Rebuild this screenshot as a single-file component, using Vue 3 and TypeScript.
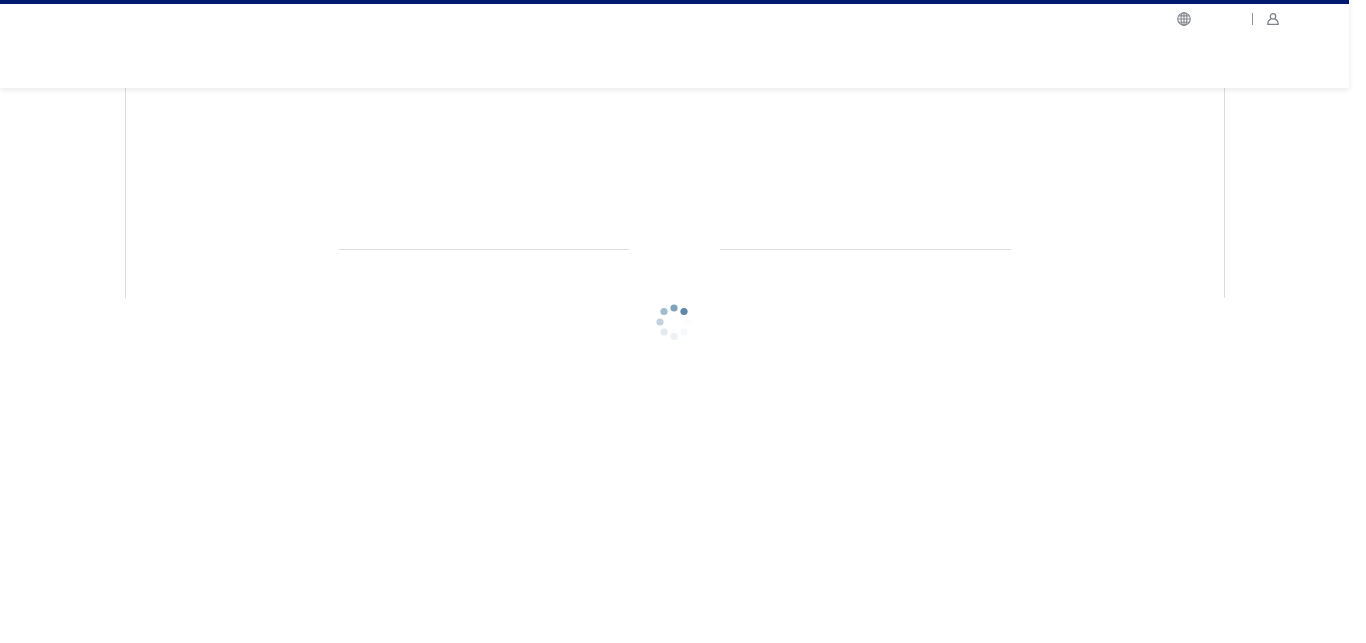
<script setup lang="ts">
// loader dots, clockwise from the top
const dots = [
  { x: 24, y: 10, color: '#7fa3bb' },
  { x: 34, y: 13.5, color: '#5d88a8' },
  { x: 38, y: 24, color: '#fbfcfd' },
  { x: 34, y: 34, color: '#f6f8f9' },
  { x: 24, y: 38.5, color: '#edf1f5' },
  { x: 14, y: 34, color: '#e4eaf0' },
  { x: 10, y: 24, color: '#c0d3de' },
  { x: 14, y: 13.5, color: '#a3bdcd' }
]
</script>

<template>
  <div class="page">
    <header class="site-header">
      <div class="top-links">
        <svg class="globe" viewBox="0 0 14 14" width="14" height="14" fill="none" stroke="#85898f" stroke-width="1.15">
          <circle cx="7" cy="7" r="6.3" />
          <ellipse cx="7" cy="7" rx="2.9" ry="6.3" />
          <path d="M7 .7v12.6M.7 7h12.6M1.6 3.8h10.8M1.6 10.2h10.8" />
        </svg>
        <span class="sep"></span>
        <svg class="user" viewBox="0 0 12 12" width="12" height="12" fill="none" stroke="#7d8189" stroke-width="1.25">
          <circle cx="6" cy="3.4" r="2.7" />
          <path d="M4 6.2C2.2 6.8.8 8.2.8 11.4h10.4c0-3.2-1.4-4.6-3.2-5.2" />
        </svg>
      </div>
    </header>

    <main class="content">
      <div class="divider-row">
        <span class="rule rule-left"></span>
        <span class="rule rule-right"></span>
      </div>
    </main>

    <div class="loader">
      <svg viewBox="0 0 48 48" width="48" height="48">
        <circle v-for="(d, i) in dots" :key="i" :cx="d.x" :cy="d.y" r="3.6" :fill="d.color" />
      </svg>
    </div>
  </div>
</template>

<style scoped>
.page {
  width: 1349px;
  min-height: 643px;
  background: #fff;
}

.site-header {
  position: relative;
  z-index: 1;
  box-sizing: border-box;
  height: 88px;
  border-top: 4px solid #001a70;
  background: #fff;
  box-shadow: 0 2px 6px rgba(0, 0, 0, 0.09);
}

.top-links {
  display: flex;
  align-items: center;
  justify-content: flex-end;
  padding: 8px 70px 0 0;
  height: 14px;
}

.sep {
  width: 1px;
  height: 12px;
  margin-left: 61px;
  background: #8f939b;
}

.user {
  margin-left: 14px;
}

.content {
  box-sizing: border-box;
  width: 1100px;
  height: 210px;
  margin-left: 125px;
  padding: 161px 0 0 213px;
  border-left: 1px solid #dcdcdc;
  border-right: 1px solid #dcdcdc;
}

.divider-row {
  display: flex;
  gap: 91px;
}

.rule {
  height: 1px;
  background: #dcdcdc;
}

.rule-left {
  width: 290px;
}

.rule-right {
  width: 291px;
}

.loader {
  display: flex;
  justify-content: center;
  padding-right: 1px;
}
</style>

<style>
html,
body {
  background: #fff;
  overflow: hidden;
}
</style>
